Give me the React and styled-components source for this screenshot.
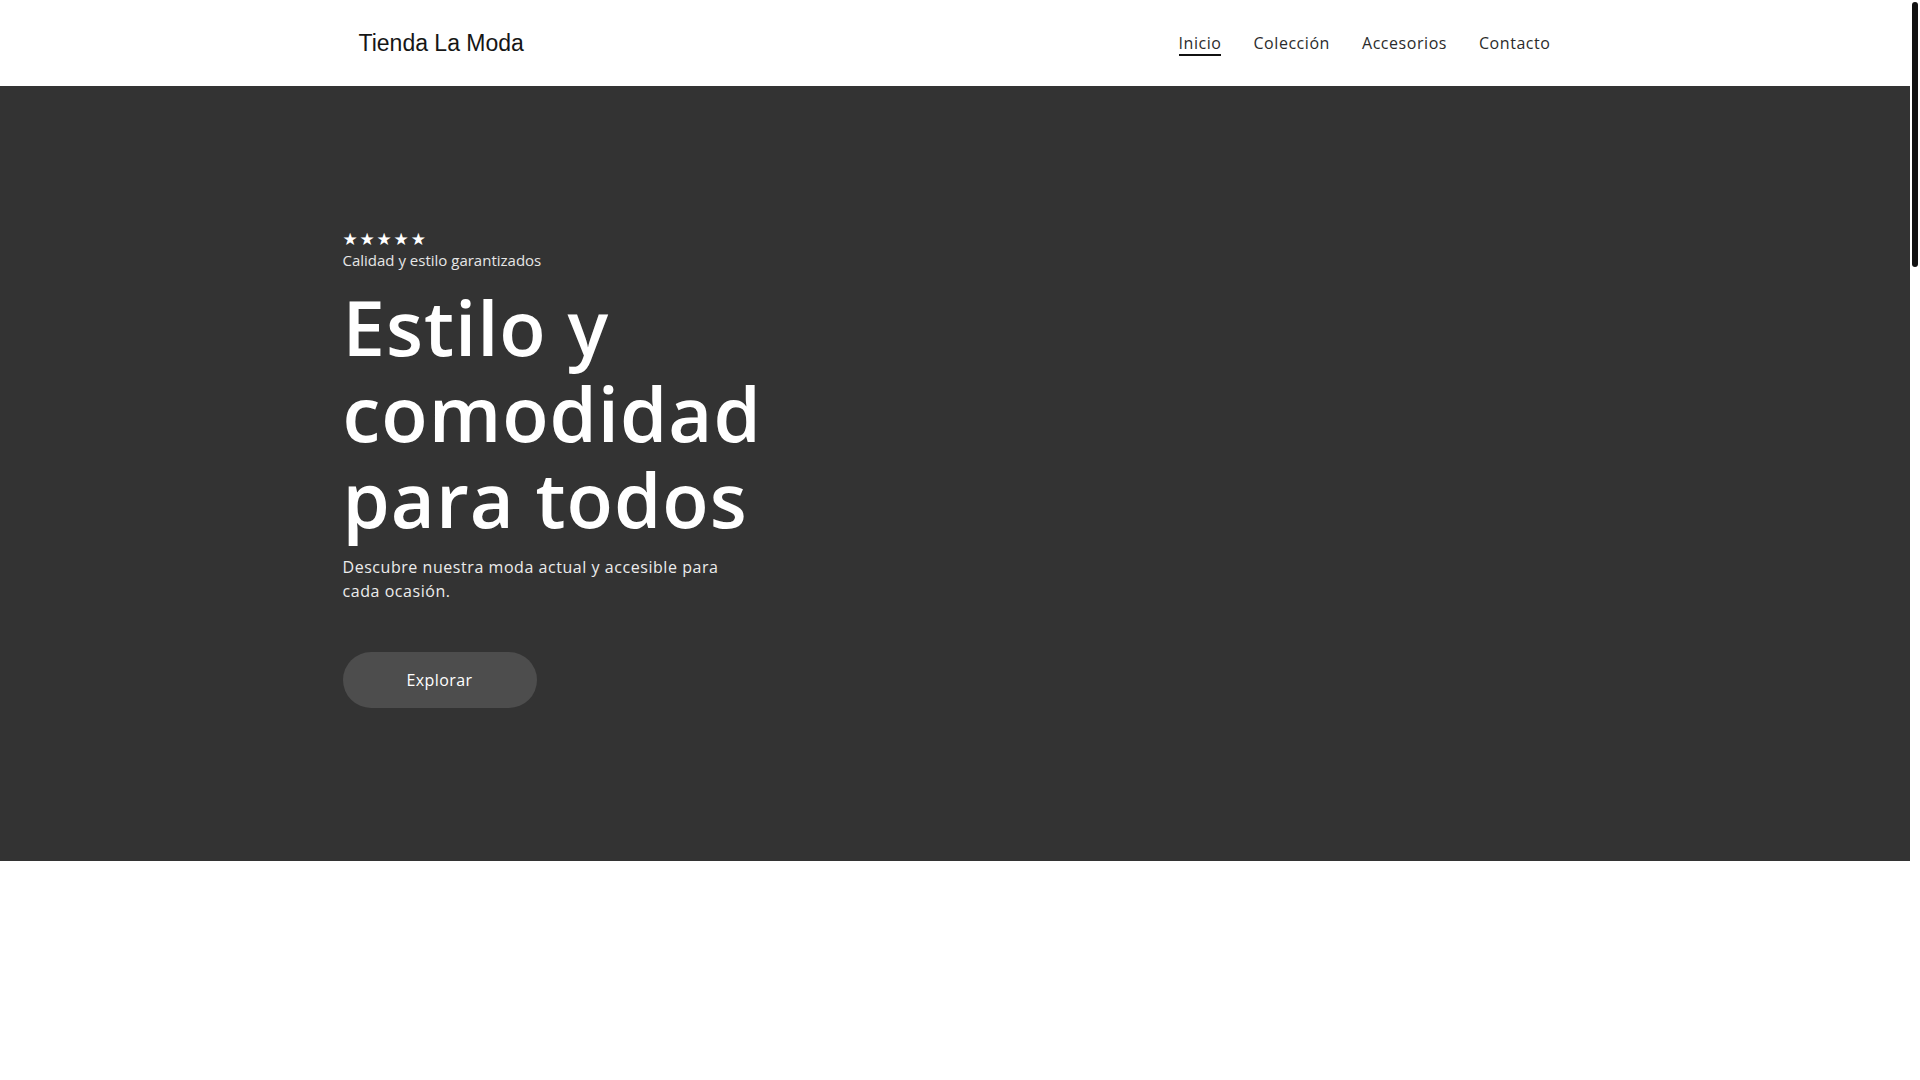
import React from 'react';
import styled, { createGlobalStyle } from 'styled-components';

const GlobalStyle = createGlobalStyle`
  html, body {
    margin: 0;
    padding: 0;
    background: #fff;
  }
  body {
    font-family: 'Open Sans', 'Liberation Sans', sans-serif;
  }
  ::-webkit-scrollbar {
    width: 0;
  }
`;

const Page = styled.div`
  margin-right: 10px;
`;

const ScrollTrack = styled.div`
  position: fixed;
  top: 0;
  right: 0;
  width: 10px;
  height: 100vh;
  background: #fff;
`;

const ScrollThumb = styled.div`
  margin: 2px 2px 0;
  height: 265px;
  border-radius: 3px;
  background: #111;
`;

const Header = styled.header`
  height: 86px;
  background: #fff;
`;

const HeaderInner = styled.div`
  max-width: 1225px;
  height: 100%;
  margin: 0 auto;
  padding: 0 17px 0 16px;
  box-sizing: border-box;
  display: flex;
  align-items: center;
  justify-content: space-between;
`;

const Logo = styled.div`
  font-family: 'Liberation Sans', Arial, sans-serif;
  font-size: 23px;
  color: #161616;
  margin-top: 1px;
`;

const Nav = styled.nav`
  display: flex;
  gap: 32px;
  align-items: center;
`;

const NavLink = styled.a`
  font-size: 16px;
  line-height: 22px;
  letter-spacing: 0.55px;
  color: #2b2b2b;
  text-decoration: none;
  padding-top: 2px;
  border-bottom: 2px solid ${p => (p.$active ? '#111' : 'transparent')};
`;

const Hero = styled.section`
  height: 775px;
  background: #333333;
  display: flex;
  align-items: center;
`;

const HeroInner = styled.div`
  width: 1225px;
  margin: 0 auto;
  padding-bottom: 10px;
  color: #fff;
`;

const Stars = styled.div`
  font-family: 'DejaVu Sans', sans-serif;
  font-size: 17px;
  line-height: 20px;
  letter-spacing: 1.8px;
`;

const Tagline = styled.div`
  margin-top: 1px;
  font-size: 15px;
  line-height: 21px;
  color: #e6e6e6;
`;

const Title = styled.h1`
  margin: 13px 0 0;
  font-size: 76px;
  line-height: 86px;
  font-weight: 600;
  letter-spacing: 1px;
  color: #fff;
`;

const Lead = styled.p`
  margin: 13px 0 0;
  max-width: 410px;
  font-size: 16px;
  line-height: 24px;
  letter-spacing: 0.55px;
  color: #ececec;
`;

const Button = styled.button`
  margin-top: 49px;
  width: 194px;
  height: 56px;
  border: none;
  border-radius: 28px;
  background: #4d4d4d;
  color: #fff;
  font-family: inherit;
  font-size: 16px;
  letter-spacing: 0.4px;
  cursor: pointer;
`;

const Below = styled.div`
  height: 3540px;
  background: #fff;
`;

const links = ['Inicio', 'Colección', 'Accesorios', 'Contacto'];

export default function App() {
  return (
    <>
      <GlobalStyle />
      <Page>
        <Header>
          <HeaderInner>
            <Logo>Tienda La Moda</Logo>
            <Nav>
              {links.map((l, i) => (
                <NavLink key={l} href="#" $active={i === 0}>
                  {l}
                </NavLink>
              ))}
            </Nav>
          </HeaderInner>
        </Header>
        <Hero>
          <HeroInner>
            <Stars>★★★★★</Stars>
            <Tagline>Calidad y estilo garantizados</Tagline>
            <Title>
              Estilo y<br />
              comodidad<br />
              para todos
            </Title>
            <Lead>Descubre nuestra moda actual y accesible para cada ocasión.</Lead>
            <Button>Explorar</Button>
          </HeroInner>
        </Hero>
        <Below />
      </Page>
      <ScrollTrack>
        <ScrollThumb />
      </ScrollTrack>
    </>
  );
}
